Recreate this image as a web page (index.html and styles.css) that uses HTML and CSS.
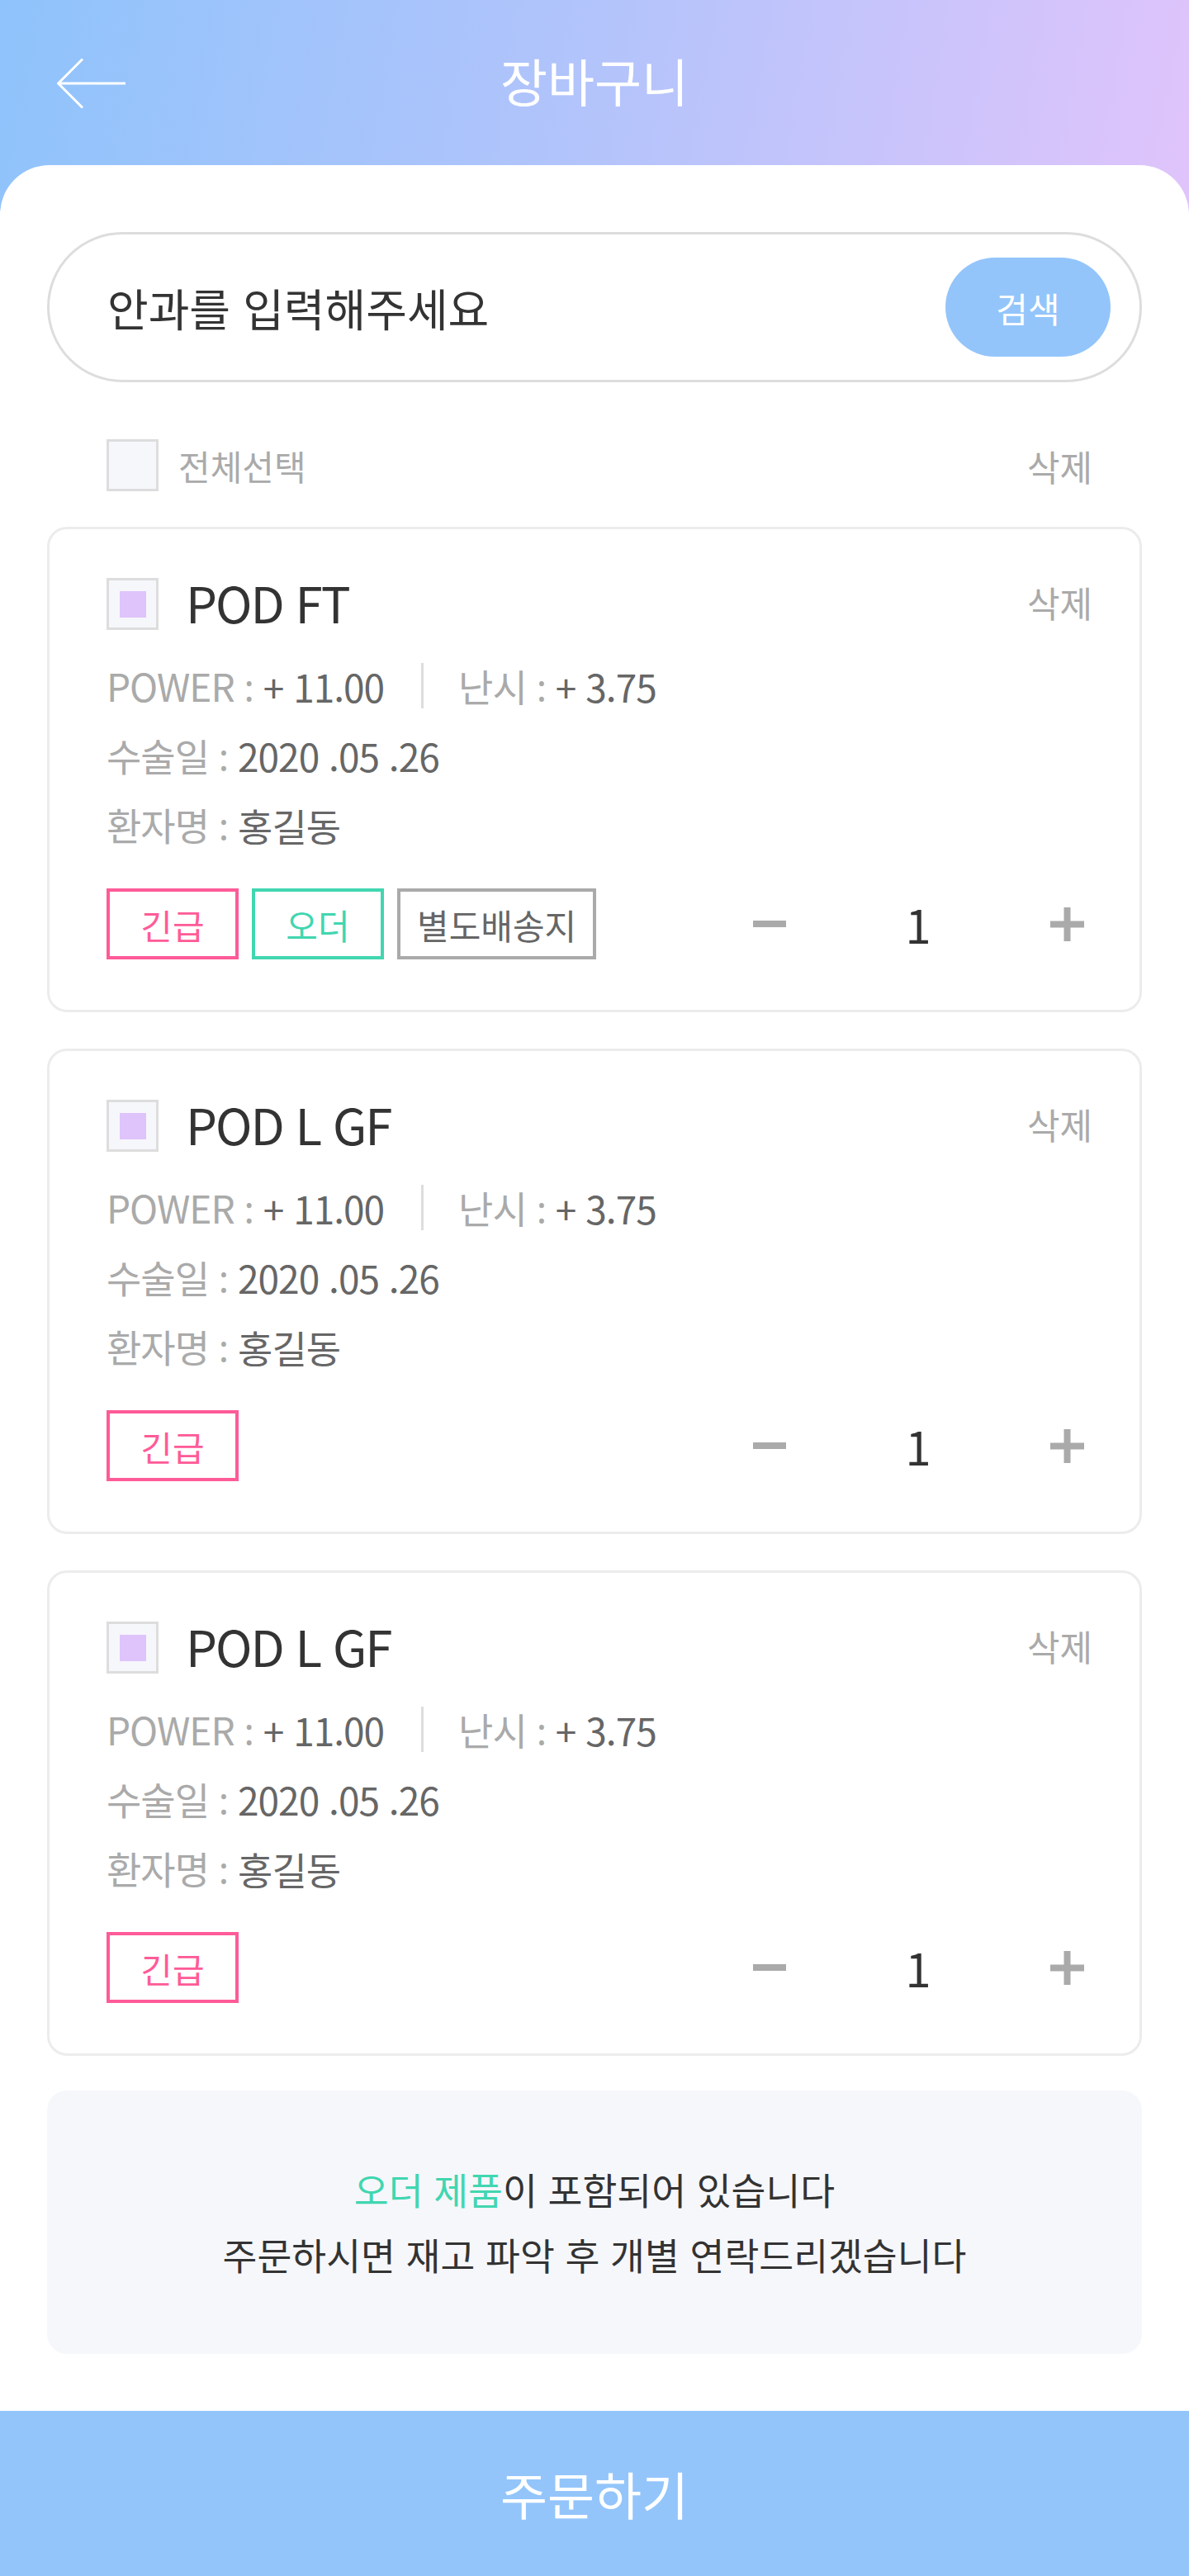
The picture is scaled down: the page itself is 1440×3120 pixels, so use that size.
FILE: index.html
```html
<!DOCTYPE html>
<html lang="ko">
<head>
<meta charset="utf-8">
<title>장바구니</title>
<link rel="stylesheet" href="styles.css">
</head>
<body>
<div class="app">
  <header class="topbar">
    <button class="back" aria-label="뒤로">
      <svg width="84" height="62" viewBox="0 0 84 62"><path d="M31 1.5 L1.5 31 L31 60.5 M1.5 31 H83" fill="none" stroke="#fff" stroke-width="3"/></svg>
    </button>
    <h1 class="title">장바구니</h1>
    <span class="spacer"></span>
  </header>

  <main class="sheet">
    <div class="search">
      <span class="search-text">안과를 입력해주세요</span>
      <button class="search-btn">검색</button>
    </div>

    <div class="select-row">
      <div class="select-all"><span class="check"></span><span class="select-label">전체선택</span></div>
      <span class="del">삭제</span>
    </div>

    <ul class="cart">
      <li class="card">
        <div class="card-head">
          <span class="check on"></span>
          <span class="name">POD FT</span>
          <span class="del">삭제</span>
        </div>
        <div class="info">
          <p class="row"><span class="lbl">POWER <span class="colon">:</span> </span><span class="val">+ 11.00</span><span class="sep"></span><span class="lbl">난시 <span class="colon">:</span> </span><span class="val">+ 3.75</span></p>
          <p class="row"><span class="lbl">수술일 <span class="colon">:</span> </span><span class="val">2020 .05 .26</span></p>
          <p class="row"><span class="lbl">환자명 <span class="colon">:</span> </span><span class="val">홍길동</span></p>
        </div>
        <div class="card-foot">
          <div class="tags">
            <span class="tag pink">긴급</span>
            <span class="tag teal">오더</span>
            <span class="tag gray">별도배송지</span>
          </div>
          <div class="qty">
            <svg class="minus" width="40" height="8" viewBox="0 0 40 8"><rect width="40" height="8" fill="#aaa"/></svg>
            <span class="num">1</span>
            <svg class="plus" width="41" height="41" viewBox="0 0 41 41"><rect y="16.5" width="41" height="8" fill="#aaa"/><rect x="16.5" width="8" height="41" fill="#aaa"/></svg>
          </div>
        </div>
      </li>

      <li class="card">
        <div class="card-head">
          <span class="check on"></span>
          <span class="name">POD L GF</span>
          <span class="del">삭제</span>
        </div>
        <div class="info">
          <p class="row"><span class="lbl">POWER <span class="colon">:</span> </span><span class="val">+ 11.00</span><span class="sep"></span><span class="lbl">난시 <span class="colon">:</span> </span><span class="val">+ 3.75</span></p>
          <p class="row"><span class="lbl">수술일 <span class="colon">:</span> </span><span class="val">2020 .05 .26</span></p>
          <p class="row"><span class="lbl">환자명 <span class="colon">:</span> </span><span class="val">홍길동</span></p>
        </div>
        <div class="card-foot">
          <div class="tags">
            <span class="tag pink">긴급</span>
          </div>
          <div class="qty">
            <svg class="minus" width="40" height="8" viewBox="0 0 40 8"><rect width="40" height="8" fill="#aaa"/></svg>
            <span class="num">1</span>
            <svg class="plus" width="41" height="41" viewBox="0 0 41 41"><rect y="16.5" width="41" height="8" fill="#aaa"/><rect x="16.5" width="8" height="41" fill="#aaa"/></svg>
          </div>
        </div>
      </li>

      <li class="card">
        <div class="card-head">
          <span class="check on"></span>
          <span class="name">POD L GF</span>
          <span class="del">삭제</span>
        </div>
        <div class="info">
          <p class="row"><span class="lbl">POWER <span class="colon">:</span> </span><span class="val">+ 11.00</span><span class="sep"></span><span class="lbl">난시 <span class="colon">:</span> </span><span class="val">+ 3.75</span></p>
          <p class="row"><span class="lbl">수술일 <span class="colon">:</span> </span><span class="val">2020 .05 .26</span></p>
          <p class="row"><span class="lbl">환자명 <span class="colon">:</span> </span><span class="val">홍길동</span></p>
        </div>
        <div class="card-foot">
          <div class="tags">
            <span class="tag pink">긴급</span>
          </div>
          <div class="qty">
            <svg class="minus" width="40" height="8" viewBox="0 0 40 8"><rect width="40" height="8" fill="#aaa"/></svg>
            <span class="num">1</span>
            <svg class="plus" width="41" height="41" viewBox="0 0 41 41"><rect y="16.5" width="41" height="8" fill="#aaa"/><rect x="16.5" width="8" height="41" fill="#aaa"/></svg>
          </div>
        </div>
      </li>
    </ul>

    <div class="notice">
      <p><span class="hl">오더 제품</span>이 포함되어 있습니다</p>
      <p>주문하시면 재고 파악 후 개별 연락드리겠습니다</p>
    </div>
  </main>

  <footer class="bottom">
    <button class="order">주문하기</button>
  </footer>
</div>
</body>
</html>
```

FILE: styles.css
```css
* { box-sizing: border-box; }

html, body {
  margin: 0;
  padding: 0;
  background: #fff;
}

body {
  font-family: "Noto Sans CJK KR", "Noto Sans", sans-serif;
  color: #333;
}

button {
  font-family: inherit;
  border: 0;
  padding: 0;
  cursor: pointer;
}

p { margin: 0; }

.app {
  width: 1440px;
  background: linear-gradient(100deg, #8fc3fb 0%, #b3c4fb 50%, #e0c4fb 100%) no-repeat;
  background-size: 100% 300px;
}

/* top bar */
.topbar {
  height: 200px;
  display: grid;
  grid-template-columns: 1fr auto 1fr;
  align-items: center;
}

.back {
  justify-self: start;
  margin-left: 69px;
  margin-top: 2px;
  background: none;
  display: flex;
}

.title {
  margin: -6px 0 0;
  font-size: 62px;
  font-weight: 400;
  color: #fff;
  line-height: 1;
}

/* white sheet */
.sheet {
  background: #fff;
  border-radius: 60px 60px 0 0;
  padding: 81px 57px 69px;
}

.search {
  height: 182px;
  border: 3px solid #ddd;
  border-radius: 91px;
  display: flex;
  align-items: center;
  justify-content: space-between;
  padding: 0 35px 0 70px;
}

.search-text {
  font-size: 54px;
  color: #333;
}

.search-btn {
  width: 200px;
  height: 120px;
  border-radius: 60px;
  background: #93c5fb;
  color: #fff;
  font-size: 42px;
}

.select-row {
  margin-top: 69px;
  height: 63px;
  display: flex;
  align-items: center;
  justify-content: space-between;
  padding: 0 60px 0 72px;
}

.select-all {
  display: flex;
  align-items: center;
}

.select-label {
  margin-left: 24px;
  font-size: 42px;
  color: #aaa;
}

.del {
  font-size: 43px;
  color: #aaa;
}

.check {
  width: 63px;
  height: 63px;
  border: 3px solid #ddd;
  background: #f6f7fb;
  display: flex;
  align-items: center;
  justify-content: center;
  flex: none;
}

.check.on::before {
  content: "";
  width: 32px;
  height: 32px;
  background: #dfc4fb;
}

/* cards */
.cart {
  list-style: none;
  margin: 43px 0 0;
  padding: 0;
  display: flex;
  flex-direction: column;
  gap: 44px;
}

.card {
  border: 3px solid #ececec;
  border-radius: 24px;
  padding: 59px 57px 61px 69px;
}

.card-head {
  height: 63px;
  display: flex;
  align-items: center;
}

.name {
  margin: 0 0 6px 33px;
  font-size: 60px;
  letter-spacing: -2px;
  color: #333;
  line-height: 1;
}

.card-head .del {
  margin: 0 0 6px auto;
}

.info {
  margin-top: 26px;
}

.row {
  font-size: 46px;
  letter-spacing: -1px;
  line-height: 84px;
  height: 84px;
  display: flex;
  align-items: center;
  white-space: pre;
}

.lbl { color: #aaa; }
.val { color: #666; }

.colon {
  font-family: "Noto Sans", sans-serif;
}

.sep {
  width: 3px;
  height: 55px;
  background: #ddd;
  margin: -2px 42px 0 45px;
}

.card-foot {
  margin-top: 35px;
  display: flex;
  align-items: center;
  justify-content: space-between;
}

.tags {
  display: flex;
  gap: 16px;
}

.tag {
  min-width: 160px;
  height: 86px;
  padding: 0 20px;
  border: 4px solid;
  display: flex;
  align-items: center;
  justify-content: center;
  font-size: 42px;
}

.tag.pink { border-color: #ff5b98; color: #ff5b98; }
.tag.teal { border-color: #41d6b0; color: #41d6b0; }
.tag.gray { border-color: #aaa; color: #666; }

.qty {
  display: flex;
  align-items: center;
  gap: 130px;
  margin-right: 10px;
}

.minus, .plus { display: block; }

.num {
  width: 60px;
  text-align: center;
  font-size: 56px;
  line-height: 1;
  color: #333;
}

/* notice */
.notice {
  margin-top: 42px;
  background: #f6f7fb;
  border-radius: 24px;
  padding: 80px 0 81px;
  text-align: center;
  font-size: 45.5px;
  line-height: 79px;
  color: #333;
}

.hl { color: #41d6b0; }

/* bottom */
.bottom {
  height: 200px;
}

.order {
  width: 100%;
  height: 200px;
  background: #93c5fb;
  color: #fff;
  font-size: 62px;
}
```
